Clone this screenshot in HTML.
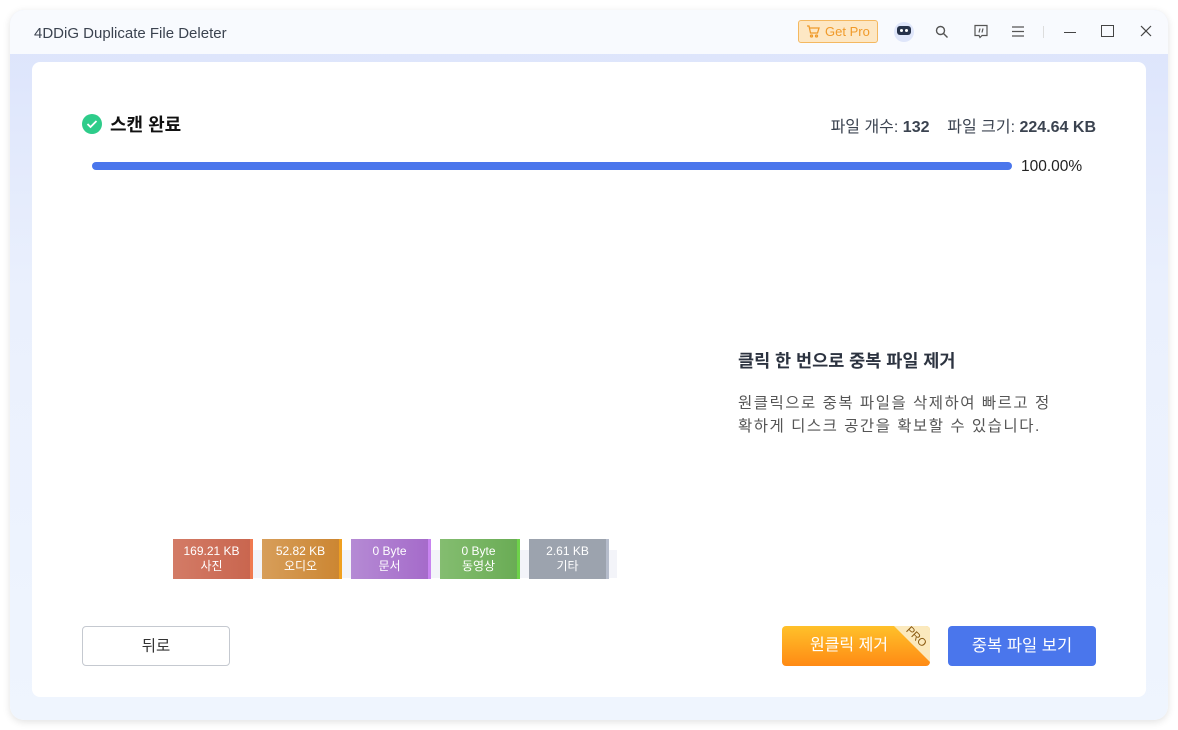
<!DOCTYPE html>
<html><head><meta charset="utf-8">
<style>
*{margin:0;padding:0;box-sizing:border-box}
body{width:1178px;height:730px;background:#fff;font-family:"Liberation Sans","Noto Sans CJK KR",sans-serif;position:relative;overflow:hidden}
.win{position:absolute;left:10px;top:10px;width:1158px;height:710px;border-radius:14px;background:linear-gradient(#dbe3fb,#eaf0fd 40%,#eff5fe);box-shadow:0 2px 8px rgba(0,0,0,.12);overflow:hidden}
.tb{position:absolute;left:0;top:0;width:100%;height:44px;background:#f8fafe}
.title{position:absolute;left:24px;top:15px;font-size:15px;color:#3b4350}
.card{position:absolute;left:22px;top:52px;width:1114px;height:635px;background:#fff;border-radius:8px}
.abs{position:absolute}
.seg{position:absolute;top:529px;height:40px;color:#fff;font-size:12px;text-align:center;line-height:15px;padding-top:5px}
</style></head><body>
<div class="win">
 <div class="tb">
  <div class="title">4DDiG Duplicate File Deleter</div>
  <div class="abs" style="left:788px;top:10px;width:80px;height:23px;border:1px solid #f4b860;background:#fde7c4;border-radius:3px;color:#f09a2a;font-size:13px;line-height:21px;padding-left:26px">Get Pro</div>
  <svg class="abs" style="left:796px;top:15px" width="14" height="13" viewBox="0 0 14 13" fill="none" stroke="#f09a2a" stroke-width="1.3"><path d="M1 1h2l1.5 7h7l1.5-5H4"/><circle cx="5.5" cy="11" r="1"/><circle cx="10.5" cy="11" r="1"/></svg>
  <div class="abs" style="left:884px;top:12px;width:20px;height:20px;border-radius:50%;background:#dfe6fa"></div>
  <div class="abs" style="left:887px;top:16px;width:14px;height:9px;border-radius:3px;background:#26324a"></div>
  <div class="abs" style="left:890px;top:19px;width:3px;height:3px;background:#fff;border-radius:50%"></div>
  <div class="abs" style="left:895px;top:19px;width:3px;height:3px;background:#fff;border-radius:50%"></div>
  <svg class="abs" style="left:925px;top:15px" width="14" height="14" fill="none" stroke="#555" stroke-width="1.4"><circle cx="5.5" cy="5.5" r="4"/><path d="M8.5 8.5l4 4"/></svg>
  <svg class="abs" style="left:963px;top:14px" width="16" height="15" fill="none" stroke="#555" stroke-width="1.2"><path d="M2 1.5h12v10H9l-2 2-1-2H2z"/><path d="M7 4.5l-1 4M10 4.5l-1 4"/></svg>
  <svg class="abs" style="left:1001px;top:15px" width="14" height="13" stroke="#555" stroke-width="1.2"><path d="M1 2h12M1 6.5h12M1 11h12"/></svg>
  <div class="abs" style="left:1033px;top:16px;width:1px;height:12px;background:#ddd"></div>
  <div class="abs" style="left:1054px;top:22px;width:12px;height:1px;background:#444"></div>
  <div class="abs" style="left:1091px;top:15px;width:13px;height:12px;border:1.3px solid #444"></div>
  <svg class="abs" style="left:1130px;top:15px" width="12" height="12" stroke="#444" stroke-width="1.2"><path d="M1 1l10 10M11 1L1 11"/></svg>
 </div>
 <div class="card">
  <div class="abs" style="left:50px;top:52px;width:20px;height:20px;border-radius:50%;background:#2ecc8a"></div>
  <svg class="abs" style="left:54px;top:57px" width="12" height="10" fill="none" stroke="#fff" stroke-width="1.8"><path d="M1.5 5l3 3 6-6"/></svg>
  <div class="abs" style="left:78px;top:49px;font-size:18px;font-weight:bold;color:#111">스캔 완료</div>
  <div class="abs" style="right:50px;top:51px;font-size:16px;color:#3b4350">파일 개수: <b>132</b>&nbsp;&nbsp;&nbsp;&nbsp;파일 크기: <b>224.64 KB</b></div>
  <div class="abs" style="left:60px;top:100px;width:920px;height:8px;border-radius:4px;background:#4a76ec"></div>
  <div class="abs" style="left:989px;top:96px;font-size:15.5px;color:#222">100.00%</div>
  <div class="abs" style="left:706px;top:286px;font-size:17.5px;font-weight:bold;color:#2c3340">클릭 한 번으로 중복 파일 제거</div>
  <div class="abs" style="left:706px;top:330px;width:380px;font-size:15.5px;line-height:23px;color:#555;white-space:nowrap;letter-spacing:1.5px">원클릭으로 중복 파일을 삭제하여 빠르고 정<br>확하게 디스크 공간을 확보할 수 있습니다.</div>
  <div class="abs" style="left:150px;top:488px;width:435px;height:28px;background:#eef0f6;opacity:.7"></div>
 </div>
 <div class="seg" style="left:163px;width:80px;background:linear-gradient(90deg,#d37b66,#c9664f);border-right:3px solid #f07a50">169.21 KB<br>사진</div>
 <div class="seg" style="left:252px;width:80px;background:linear-gradient(90deg,#d79e5a,#cc8632);border-right:3px solid #f0a020">52.82 KB<br>오디오</div>
 <div class="seg" style="left:341px;width:80px;background:linear-gradient(90deg,#b58ad4,#a56bca);border-right:3px solid #c884f0">0 Byte<br>문서</div>
 <div class="seg" style="left:430px;width:80px;background:linear-gradient(90deg,#84bd70,#6aac55);border-right:3px solid #6ed24a">0 Byte<br>동영상</div>
 <div class="seg" style="left:519px;width:80px;background:#9ca3ae;border-right:3px solid #b5bccb">2.61 KB<br>기타</div>
 <div class="abs" style="left:72px;top:616px;width:148px;height:40px;border:1px solid #c5c9d0;border-radius:4px;text-align:center;line-height:40px;font-size:15.5px;color:#333;background:#fff">뒤로</div>
 <div class="abs" style="left:772px;top:616px;width:148px;height:40px;border-radius:4px;background:linear-gradient(#ffc12a,#ff8a14);color:#fff;font-size:16px;text-align:center;line-height:40px;padding-right:14px;overflow:hidden">원클릭 제거
  <div class="abs" style="right:0;top:0;width:0;height:0;border-top:36px solid #fbe9bd;border-left:36px solid transparent"></div>
  <div class="abs" style="right:-3px;top:5px;width:34px;transform:rotate(45deg);color:#8a5a10;font-size:11px;line-height:12px;text-align:center">PRO</div></div>
 <div class="abs" style="left:938px;top:616px;width:148px;height:40px;border-radius:4px;background:#4a76ec;color:#fff;font-size:16.5px;text-align:center;line-height:40px">중복 파일 보기</div>
</div>
</body></html>
